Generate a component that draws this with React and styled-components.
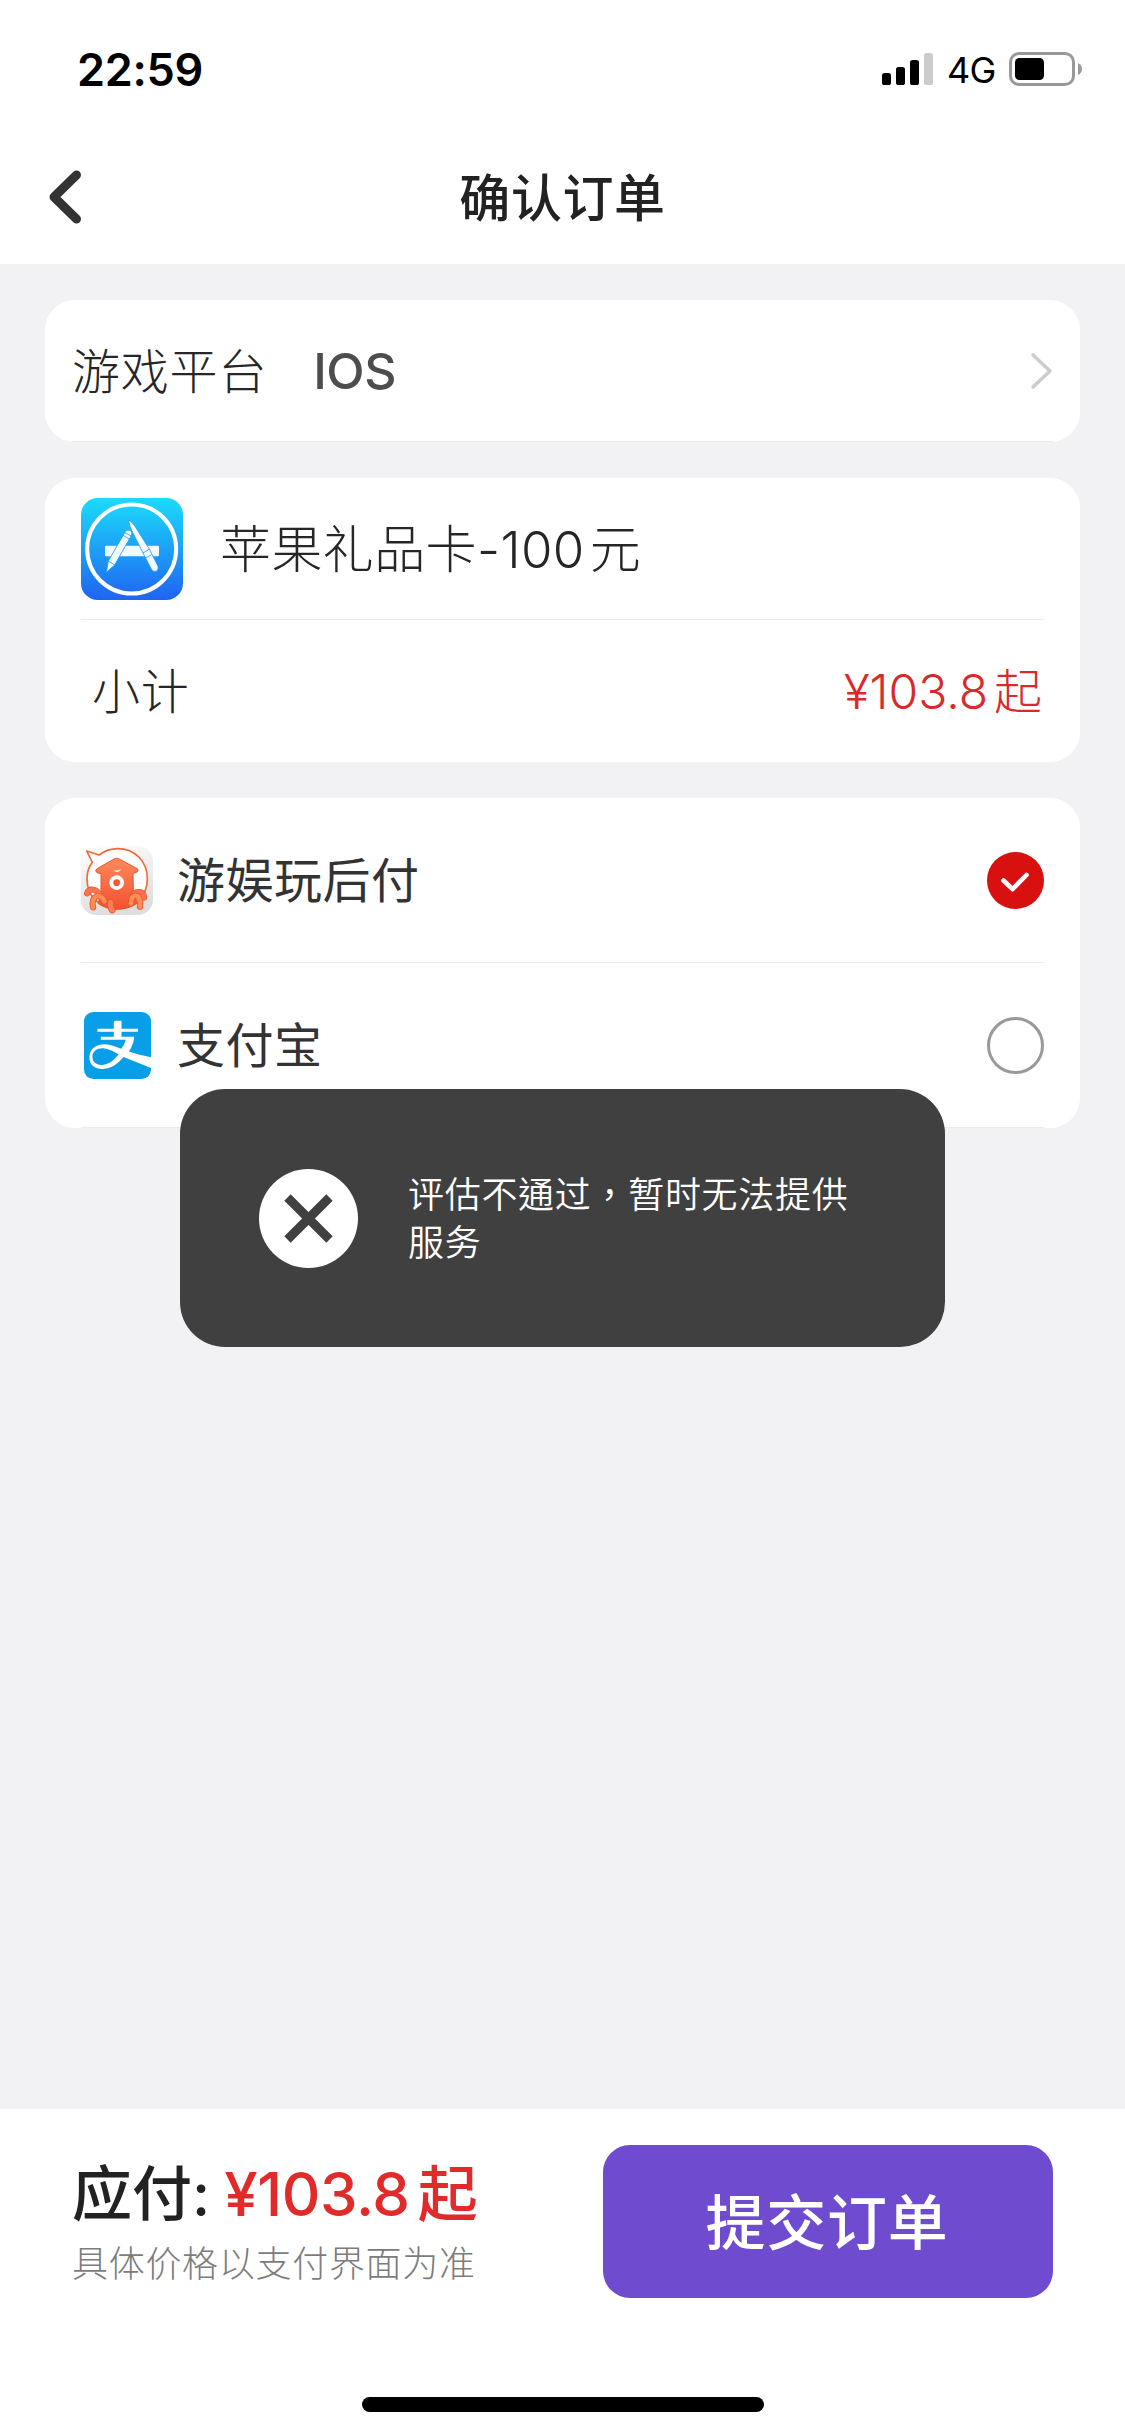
import React from "react";
import styled, { createGlobalStyle } from "styled-components";

const GlobalStyle = createGlobalStyle`
  *, *::before, *::after { box-sizing: border-box; }
  html, body { margin: 0; padding: 0; }
  body {
    background: #f2f2f5;
    font-family: Inter, "Noto Sans CJK SC", sans-serif;
    -webkit-font-smoothing: antialiased;
  }
  svg { display: block; flex: none; }
`;

const Screen = styled.div`
  position: relative;
  display: flex;
  flex-direction: column;
  width: 1125px;
  height: 2436px;
  overflow: hidden;
  background: #f2f2f5;
`;

const Header = styled.header`
  flex: none;
  height: 264px;
  background: #fff;
`;

const StatusBar = styled.div`
  display: flex;
  align-items: center;
  justify-content: space-between;
  height: 138px;
  padding: 0 42px 0 77px;
`;

const Clock = styled.div`
  padding-top: 1px;
  color: #000;
  font-size: 45px;
  font-weight: 600;
  line-height: 54px;
  letter-spacing: -0.3px;
`;

const StatusIcons = styled.div`
  display: flex;
  align-items: center;
`;

const Network = styled.span`
  width: 75px;
  padding: 2px 0 0 13px;
  color: #000;
  font-size: 36px;
  line-height: 44px;
  white-space: nowrap;
  letter-spacing: -0.8px;
`;

const NavBar = styled.nav`
  display: grid;
  grid-template-columns: 120px 1fr 120px;
  align-items: center;
  height: 118px;
`;

const BackButton = styled.button`
  display: flex;
  padding: 0 0 0 46px;
  border: 0;
  background: none;
`;

const Title = styled.h1`
  margin: 0;
  padding-top: 4px;
  color: #222;
  font-size: 51px;
  font-weight: 500;
  line-height: 72px;
  letter-spacing: 0.6px;
  text-align: center;
`;

const Content = styled.main`
  display: flex;
  flex: 1;
  flex-direction: column;
  gap: 36px;
  padding: 36px 45px;
`;

const Card = styled.section`
  flex: none;
  padding: 0 ${(p) => p.$inset ?? 36}px;
  border-radius: 30px;
  background: #fff;
`;

const Row = styled.div`
  display: flex;
  align-items: center;
  height: ${(p) => p.$height}px;
  border-bottom: ${(p) => (p.$divider ? "1px solid #ebebeb" : "0")};
`;

const Label = styled.span`
  padding: 2px 0 0 ${(p) => p.$indent || 0}px;
  color: ${(p) => (p.$weight ? "#333" : "#262626")};
  font-size: ${(p) => p.$size || 48}px;
  font-weight: ${(p) => p.$weight || 300};
  line-height: 72px;
  letter-spacing: ${(p) => p.$tracking ?? 0.8}px;
  white-space: nowrap;
`;

const PlatformName = styled.span`
  flex: 1;
  padding: 1px 0 0 46px;
  color: #4d4d4d;
  font-size: 50px;
  font-weight: 500;
  line-height: 72px;
  letter-spacing: -0.5px;
`;

const Subtotal = styled.span`
  margin-left: auto;
  padding: 1px 2px 0 0;
  color: #d82a2a;
  font-size: 48px;
  font-weight: 300;
  line-height: 72px;
  white-space: nowrap;
`;

const Unit = styled.span`
  margin-left: ${(p) => p.$gap}px;
`;

const Radio = styled.span`
  display: flex;
  align-items: center;
  justify-content: center;
  width: 57px;
  height: 57px;
  margin-left: auto;
  border: ${(p) => (p.$checked ? "0" : "3px solid #999")};
  border-radius: 50%;
  background: ${(p) => (p.$checked ? "#d8100f" : "#fff")};
`;

const Logo = styled.span`
  display: flex;
  justify-content: center;
  width: 72px;
  margin: 1px 24px 0 0;
`;

const Toast = styled.div`
  position: absolute;
  top: 1089px;
  left: 180px;
  display: flex;
  align-items: center;
  gap: 49px;
  width: 765px;
  height: 258px;
  padding: 0 78px;
  border-radius: 45px;
  background: #404040;
`;

const ToastText = styled.p`
  margin: 0 0 4px;
  width: 450px;
  color: #fff;
  font-family: "Noto Sans CJK TC", sans-serif;
  font-size: 36px;
  font-weight: 350;
  line-height: 48px;
  letter-spacing: 0.7px;
`;

const Footer = styled.footer`
  display: flex;
  flex: none;
  flex-direction: column;
  align-items: center;
  justify-content: space-between;
  height: 327px;
  padding: 36px 72px 24px;
  background: #fff;
`;

const PayBar = styled.div`
  display: flex;
  align-items: flex-start;
  justify-content: space-between;
  width: 100%;
`;

const Total = styled.div`
  display: flex;
  flex-direction: column;
  padding-top: 7px;
`;

const TotalLine = styled.div`
  display: flex;
  color: #222;
  font-size: 60px;
  font-weight: 500;
  line-height: 84px;
  white-space: nowrap;
`;

const TotalPrice = styled.span`
  margin-left: 14px;
  color: #e12b2b;
  letter-spacing: -0.4px;
`;

const Note = styled.div`
  padding-top: 1px;
  color: #7c7c7c;
  font-size: 36px;
  font-weight: 300;
  line-height: 54px;
  letter-spacing: 0.7px;
`;

const Submit = styled.button`
  width: 450px;
  height: 153px;
  padding: 0 2px 6px 0;
  border: 0;
  border-radius: 27px;
  background: #6f4bcf;
  color: #fff;
  font-family: inherit;
  font-size: 60px;
  font-weight: 500;
  letter-spacing: 0.8px;
`;

const HomeIndicator = styled.div`
  width: 402px;
  height: 15px;
  border-radius: 8px;
  background: #000;
`;

const Signal = () => (
  <svg width="52" height="32" viewBox="0 0 52 32">
    <rect x="0" y="20" width="9" height="12" rx="2.6" />
    <rect x="14" y="14" width="9" height="18" rx="2.6" />
    <rect x="28" y="7" width="9" height="25" rx="2.6" />
    <rect x="42" y="0" width="9" height="32" rx="2.6" fill="#ccc" />
  </svg>
);

const Battery = () => (
  <svg width="74" height="34" viewBox="0 0 74 34">
    <rect x="1.5" y="1.5" width="63" height="31" rx="8.5" fill="none" stroke="#999" strokeWidth="3" />
    <rect x="6" y="6" width="29" height="22" rx="4.5" />
    <path d="M69 11 Q73 13 73 17 Q73 21 69 23 Z" fill="#999" />
  </svg>
);

const BackIcon = () => (
  <svg width="38" height="56" viewBox="0 0 38 56" fill="none">
    <path d="M30.5 6 L8 28 L30.5 50" stroke="#333" strokeWidth="9" strokeLinecap="round" strokeLinejoin="round" />
  </svg>
);

const ChevronRight = () => (
  <svg width="23" height="38" viewBox="0 0 23 38" fill="none">
    <path d="M3 3 L20 19 L3 35" stroke="#ccc" strokeWidth="3.6" strokeLinecap="round" strokeLinejoin="round" />
  </svg>
);

const AppStoreIcon = () => (
  <svg width="102" height="102" viewBox="0 0 306 306">
    <defs>
      <linearGradient id="store" x1="0" y1="0" x2="0" y2="1">
        <stop offset="0" stopColor="#1bdcfb" />
        <stop offset="1" stopColor="#1f64f2" />
      </linearGradient>
    </defs>
    <rect width="306" height="306" rx="50" fill="url(#store)" />
    <circle cx="152" cy="153" r="133.5" fill="none" stroke="#fff" strokeWidth="12" />
    <rect x="72" y="143" width="162" height="32" rx="3" fill="#f2faff" />
    <g stroke="#239bf5" strokeWidth="2.5">
      <path d="M76 223 L82 189 L131 104 Q137 92 147 97 Q156 102 150 114 L101 201 Z" fill="#f2faff" />
      <path d="M126 112 L145 123 M131 104 L150 114 M82 189 L101 201" />
      <path d="M143 66 Q153 70 164 88 L205 153 L231 205 Q234 216 225 220 Q216 223 211 213 L186 165 L154 101 Q143 80 143 66 Z" fill="#f2faff" />
      <path d="M186 165 L205 153 M193 180 L212 170" />
    </g>
  </svg>
);

const SquidIcon = () => (
  <svg width="72" height="69" viewBox="18 24 216 207">
    <defs>
      <linearGradient id="tile" x1="0" y1="0" x2="0.3" y2="1">
        <stop offset="0" stopColor="#fff" />
        <stop offset="1" stopColor="#dedede" />
      </linearGradient>
      <linearGradient id="squid" x1="0" y1="0" x2="0" y2="1">
        <stop offset="0" stopColor="#ff8a5c" />
        <stop offset="1" stopColor="#f4502f" />
      </linearGradient>
    </defs>
    <rect x="18" y="24" width="216" height="207" rx="46" fill="url(#tile)" />
    <path
      d="M35 39 L72 51 Q98 32 128 32 C180 32 217 71 217 122 C217 174 180 212 126 212 C72 212 36 174 36 122 Q36 94 52 73 Z"
      fill="#fff" stroke="#f06a38" strokeWidth="5" strokeLinejoin="round"
    />
    <path
      d="M117 63 Q125 58 133 63 L188 93 Q192 99 185 103 L174 106 L175 160 L186 196 Q160 214 126 214 Q94 214 70 196 L78 158 L78 107 L66 104 Q58 98 66 92 Z"
      fill="url(#squid)" stroke="#e9562c" strokeWidth="3" strokeLinejoin="round"
    />
    <g fill="none" strokeLinecap="round" strokeLinejoin="round">
      <path d="M36 166 C42 150 66 150 76 174" stroke="#e9562c" strokeWidth="18" />
      <path d="M36 166 C42 150 66 150 76 174" stroke="#fb7350" strokeWidth="14" />
      <path d="M207 178 C204 158 181 160 174 174" stroke="#e9562c" strokeWidth="20" />
      <path d="M207 178 C204 158 181 160 174 174" stroke="#fb7350" strokeWidth="16" />
      <path d="M54 208 C46 174 78 160 88 190" stroke="#e9562c" strokeWidth="19" />
      <path d="M54 208 C46 174 78 160 88 190" stroke="#fd8d55" strokeWidth="14" />
      <path d="M168 196 C166 164 200 162 195 206" stroke="#e9562c" strokeWidth="19" />
      <path d="M168 196 C166 164 200 162 195 206" stroke="#fd8d55" strokeWidth="14" />
      <path d="M106 193 Q105 206 112 216" stroke="#e9562c" strokeWidth="20" />
      <path d="M106 193 Q105 206 112 216" stroke="#fd7f55" strokeWidth="15" />
    </g>
    <circle cx="125" cy="134" r="22" fill="#fff" />
    <circle cx="125" cy="134" r="10" fill="#f25a30" />
    <path d="M115 96 Q128 99 138 93 Q135 102 128 103 Q119 102 115 96 Z" fill="#ffe9e0" />
  </svg>
);

const AlipayIcon = () => (
  <svg width="67" height="67" viewBox="40 547 200 200">
    <rect x="40" y="547" width="200" height="200" rx="28" fill="#089fe8" />
    <g fill="#fff">
      <path d="M129 578 Q129 573 134 573 L152 573 L152 625 L129 625 Z" />
      <rect x="80" y="597" width="121" height="9" />
      <path d="M90 621 H190 Q188 645 174 665 L200 673 L240 682 V714 L158 681 Q130 716 96 717 C70 717 55 702 56 681 C57 658 75 643 100 643 Q122 643 151 657 Q160 646 165 630 H90 Z M143 674 Q119 657 98 655 C78 654 66 664 65 680 C65 696 76 706 95 705 Q120 704 143 674 Z" fillRule="evenodd" />
    </g>
  </svg>
);

const CheckIcon = () => (
  <svg width="57" height="57" viewBox="0 0 57 57" fill="none">
    <path d="M16.5 28.5 L25.5 37.2 L39.5 23" stroke="#fff" strokeWidth="4.6" strokeLinecap="round" strokeLinejoin="round" />
  </svg>
);

const FailIcon = () => (
  <svg width="101" height="101" viewBox="0 0 101 101">
    <circle cx="50.5" cy="50.5" r="49.5" fill="#fff" />
    <path d="M29.5 29.5 L71.5 71.5 M71.5 29.5 L29.5 71.5" stroke="#404040" strokeWidth="9" />
  </svg>
);

const methods = [
  { name: "游娱玩后付", Icon: SquidIcon, checked: true },
  { name: "支付宝", Icon: AlipayIcon, checked: false },
];

export default function App() {
  return (
    <Screen lang="zh-CN">
      <GlobalStyle />
      <Header>
        <StatusBar>
          <Clock>22:59</Clock>
          <StatusIcons>
            <Signal />
            <Network>4G</Network>
            <Battery />
          </StatusIcons>
        </StatusBar>
        <NavBar>
          <BackButton aria-label="返回">
            <BackIcon />
          </BackButton>
          <Title>确认订单</Title>
        </NavBar>
      </Header>

      <Content>
        <Card $inset={27}>
          <Row $height={142} $divider>
            <Label>游戏平台</Label>
            <PlatformName>IOS</PlatformName>
            <ChevronRight />
          </Row>
        </Card>

        <Card>
          <Row $height={142} $divider>
            <AppStoreIcon />
            <Label $size={51} $indent={37} $tracking={0.4}>
              苹果礼品卡-100<Unit $gap={5}>元</Unit>
            </Label>
          </Row>
          <Row $height={142}>
            <Label $indent={11}>小计</Label>
            <Subtotal>
              ¥103.8<Unit $gap={6}>起</Unit>
            </Subtotal>
          </Row>
        </Card>

        <Card>
          {methods.map(({ name, Icon, checked }) => (
            <Row key={name} $height={165} $divider>
              <Logo>
                <Icon />
              </Logo>
              <Label $weight={400} $tracking={0.5}>{name}</Label>
              <Radio $checked={checked}>{checked && <CheckIcon />}</Radio>
            </Row>
          ))}
        </Card>
      </Content>

      <Footer>
        <PayBar>
          <Total>
            <TotalLine>
              应付:
              <TotalPrice>
                ¥103.8<Unit $gap={8}>起</Unit>
              </TotalPrice>
            </TotalLine>
            <Note>具体价格以支付界面为准</Note>
          </Total>
          <Submit>提交订单</Submit>
        </PayBar>
        <HomeIndicator />
      </Footer>

      <Toast role="alert" lang="zh-TW">
        <FailIcon />
        <ToastText>评估不通过，暂时无法提供服务</ToastText>
      </Toast>
    </Screen>
  );
}
